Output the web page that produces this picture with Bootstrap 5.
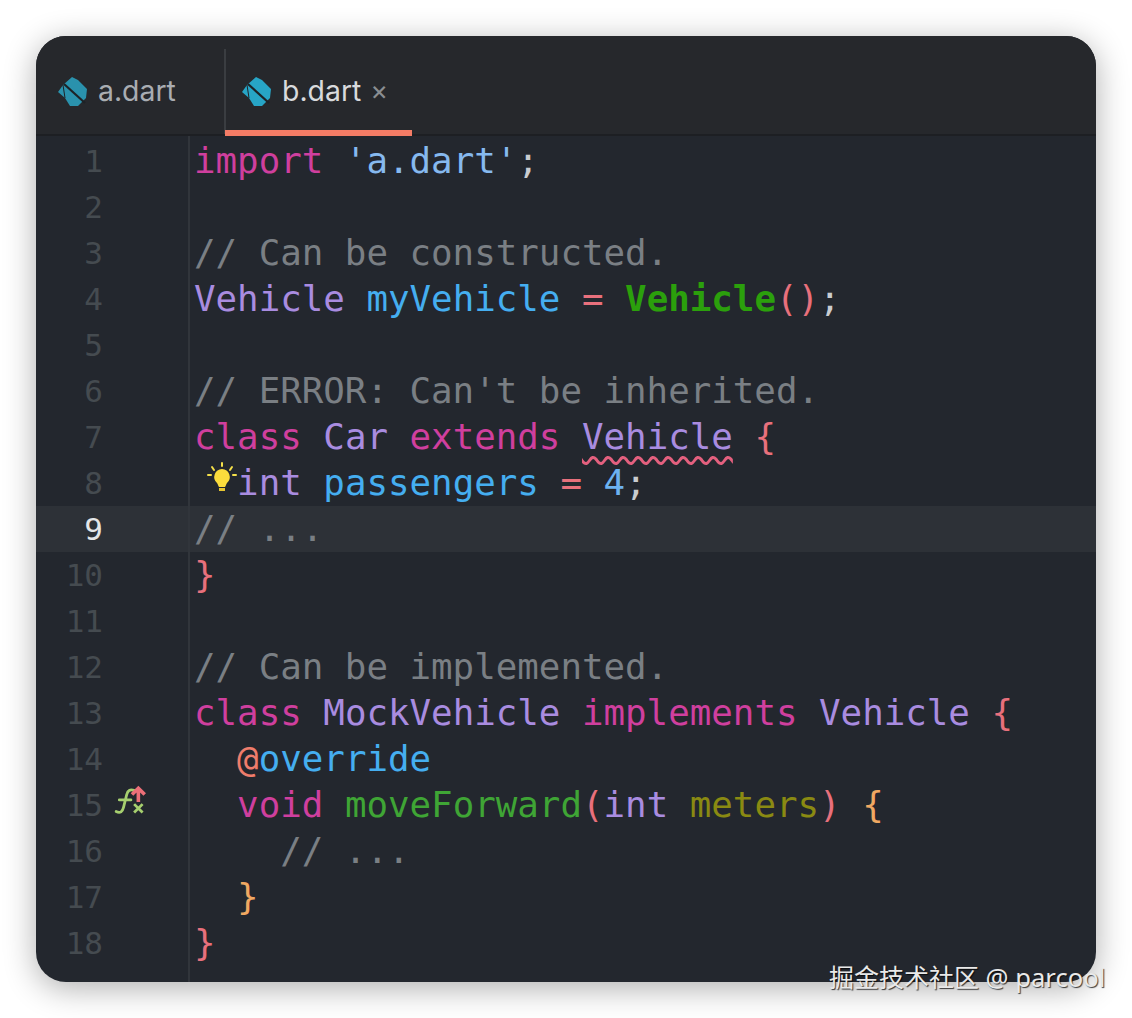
<!DOCTYPE html>
<html lang="en"><head><meta charset="utf-8"><title>b.dart</title>
<link href="https://cdn.jsdelivr.net/npm/bootstrap@5.3.0/dist/css/bootstrap.min.css" rel="stylesheet">
<style>
html,body{height:100%;background:#fff;margin:0}
.stage{width:1132px;height:1018px;padding:36px;position:relative;overflow:hidden}
.ide{height:946px;background:#23272e;border-radius:30px;overflow:hidden;box-shadow:0 6px 32px rgba(0,0,0,.32)}
.tabbar{height:100px;background:#26282c;border-bottom:2px solid #1d1f23;font-family:"Inter","Liberation Sans",sans-serif;font-size:28.4px;padding-top:13px;flex:none}
.tabx{height:85px;display:flex;align-items:center;gap:10px;position:relative}
.tab-a{width:190px;padding-left:22px;color:#a9adb2;border-right:2px solid #3a3d41}
.tab-b{width:186px;padding-left:16px;color:#d8dadd}
.tab-b::after{content:"";position:absolute;left:-1px;right:0;bottom:-2px;height:6px;background:#f47c66}
.closex{color:#8a8e92;font-size:27px;margin-left:-1px}
.codearea{padding-top:2px;font-family:"DejaVu Sans Mono","Liberation Mono",monospace;font-size:35.8px;line-height:46px;color:#d5d8dc;position:relative}
.codearea::before{content:"";position:absolute;left:152px;top:0;bottom:0;width:2px;background:#31353b}
.ln{height:46px;display:flex;white-space:pre}
.num{width:154px;flex:none;color:#454b50;font-size:31px;padding-right:87px;text-align:right;position:relative}
.src{padding-left:4px;flex:1;position:relative}
.cur{background:#2d3137}
.cur .num{color:#e4e6e8}
.k{color:#cf3f9e}.s{color:#86b9ef}.c{color:#7a7f84}.t{color:#a98ce0}.v{color:#45aef0}.g{color:#2ba00c;font-weight:700}
.p{color:#e8707c}.o{color:#f0a862}.m{color:#3fa535}.a{color:#8a8a12}.d{color:#c9ccd0}.at{color:#ef7d6c}.n{color:#6db2f0}
.wavy{text-decoration:underline wavy #e4607e 2.5px;text-underline-offset:7px}
.bulb{position:absolute;left:17px;top:2px}
.fx{position:absolute;left:78px;top:2px}
.wm{position:absolute;left:829px;top:959px;font-family:"Noto Sans CJK SC","Noto Sans",sans-serif;font-size:25px;line-height:34px;color:#e9e9e9;text-shadow:1px 1px 1px rgba(0,0,0,.75);white-space:nowrap}
.wm span{font-family:"Noto Sans",sans-serif;font-size:25.6px;margin-left:1px}
</style></head><body>
<div class="stage">
<div class="ide d-flex flex-column">
<div class="tabbar d-flex">
 <div class="tabx tab-a"><svg width="30" height="30" viewBox="0 0 30 30"><path d="M14 0 20 3 29 12 28 21 20 29H12L7 21 0 15 5 8z" fill="#2a92ad"/><path d="M6 7 27 26" stroke="#1e2226" stroke-width="2.2"/><path d="M5 8 7 21" stroke="#1e2226" stroke-width="1"/></svg><span>a.dart</span></div>
 <div class="tabx tab-b"><svg width="30" height="30" viewBox="0 0 30 30"><path d="M14 0 20 3 29 12 28 21 20 29H12L7 21 0 15 5 8z" fill="#27a5c6"/><path d="M6 7 27 26" stroke="#1e2226" stroke-width="2.2"/><path d="M5 8 7 21" stroke="#1e2226" stroke-width="1"/></svg><span>b.dart</span><span class="closex">×</span></div>
</div>
<div class="codearea flex-grow-1">
<div class="ln"><div class="num">1</div><div class="src"><span class="k">import</span> <span class="s">'a.dart'</span><span class="d">;</span></div></div>
<div class="ln"><div class="num">2</div><div class="src"></div></div>
<div class="ln"><div class="num">3</div><div class="src"><span class="c">// Can be constructed.</span></div></div>
<div class="ln"><div class="num">4</div><div class="src"><span class="t">Vehicle</span> <span class="v">myVehicle</span> <span class="p">=</span> <span class="g">Vehicle</span><span class="p">()</span><span class="d">;</span></div></div>
<div class="ln"><div class="num">5</div><div class="src"></div></div>
<div class="ln"><div class="num">6</div><div class="src"><span class="c">// ERROR: Can't be inherited.</span></div></div>
<div class="ln"><div class="num">7</div><div class="src"><span class="k">class</span> <span class="t">Car</span> <span class="k">extends</span> <span class="t wavy">Vehicle</span> <span class="p">{</span></div></div>
<div class="ln"><div class="num">8</div><div class="src">  <span class="t">int</span> <span class="v">passengers</span> <span class="p">=</span> <span class="n">4</span><span class="d">;</span>
 <svg class="bulb" width="30" height="32" viewBox="0 0 30 32"><g stroke="#f5e04a" stroke-width="2" stroke-linecap="round"><path d="M15 1v3M5 5l2 3M25 5l-2 3M1 13h3M26 13h3"/></g><path d="M15 7a8 8 0 0 0-5 14c1 1 1 3 2 4h6c1-1 1-3 2-4a8 8 0 0 0-5-14z" fill="#fbdc3c"/><rect x="12" y="26" width="6" height="3" fill="#e6c531"/></svg></div></div>
<div class="ln cur"><div class="num">9</div><div class="src"><span class="c">// ...</span></div></div>
<div class="ln"><div class="num">10</div><div class="src"><span class="p">}</span></div></div>
<div class="ln"><div class="num">11</div><div class="src"></div></div>
<div class="ln"><div class="num">12</div><div class="src"><span class="c">// Can be implemented.</span></div></div>
<div class="ln"><div class="num">13</div><div class="src"><span class="k">class</span> <span class="t">MockVehicle</span> <span class="k">implements</span> <span class="t">Vehicle</span> <span class="p">{</span></div></div>
<div class="ln"><div class="num">14</div><div class="src">  <span class="at">@</span><span class="v">override</span></div></div>
<div class="ln"><div class="num">15<svg class="fx" width="36" height="36" viewBox="0 0 34 34"><path d="M2 26c4 2 6 0 7-4l3-12c1-4 3-5 7-4M5 15h11" fill="none" stroke="#a6cf6f" stroke-width="2.6" stroke-linecap="round"/><path d="M19 19l8 8M27 19l-8 8" stroke="#a6cf6f" stroke-width="2.6"/><path d="M23 17V4M17 10l6-6 6 6" fill="none" stroke="#ec6f78" stroke-width="3.4"/></svg></div><div class="src">  <span class="k">void</span> <span class="m">moveForward</span><span class="p">(</span><span class="t">int</span> <span class="a">meters</span><span class="p">)</span> <span class="o">{</span></div></div>
<div class="ln"><div class="num">16</div><div class="src">    <span class="c">// ...</span></div></div>
<div class="ln"><div class="num">17</div><div class="src">  <span class="o">}</span></div></div>
<div class="ln"><div class="num">18</div><div class="src"><span class="p">}</span></div></div>
</div>
</div>
<div class="wm">掘金技术社区 <span>@ parcool</span></div>
</div>
<script src="https://cdn.jsdelivr.net/npm/bootstrap@5.3.0/dist/js/bootstrap.bundle.min.js"></script>
</body></html>
